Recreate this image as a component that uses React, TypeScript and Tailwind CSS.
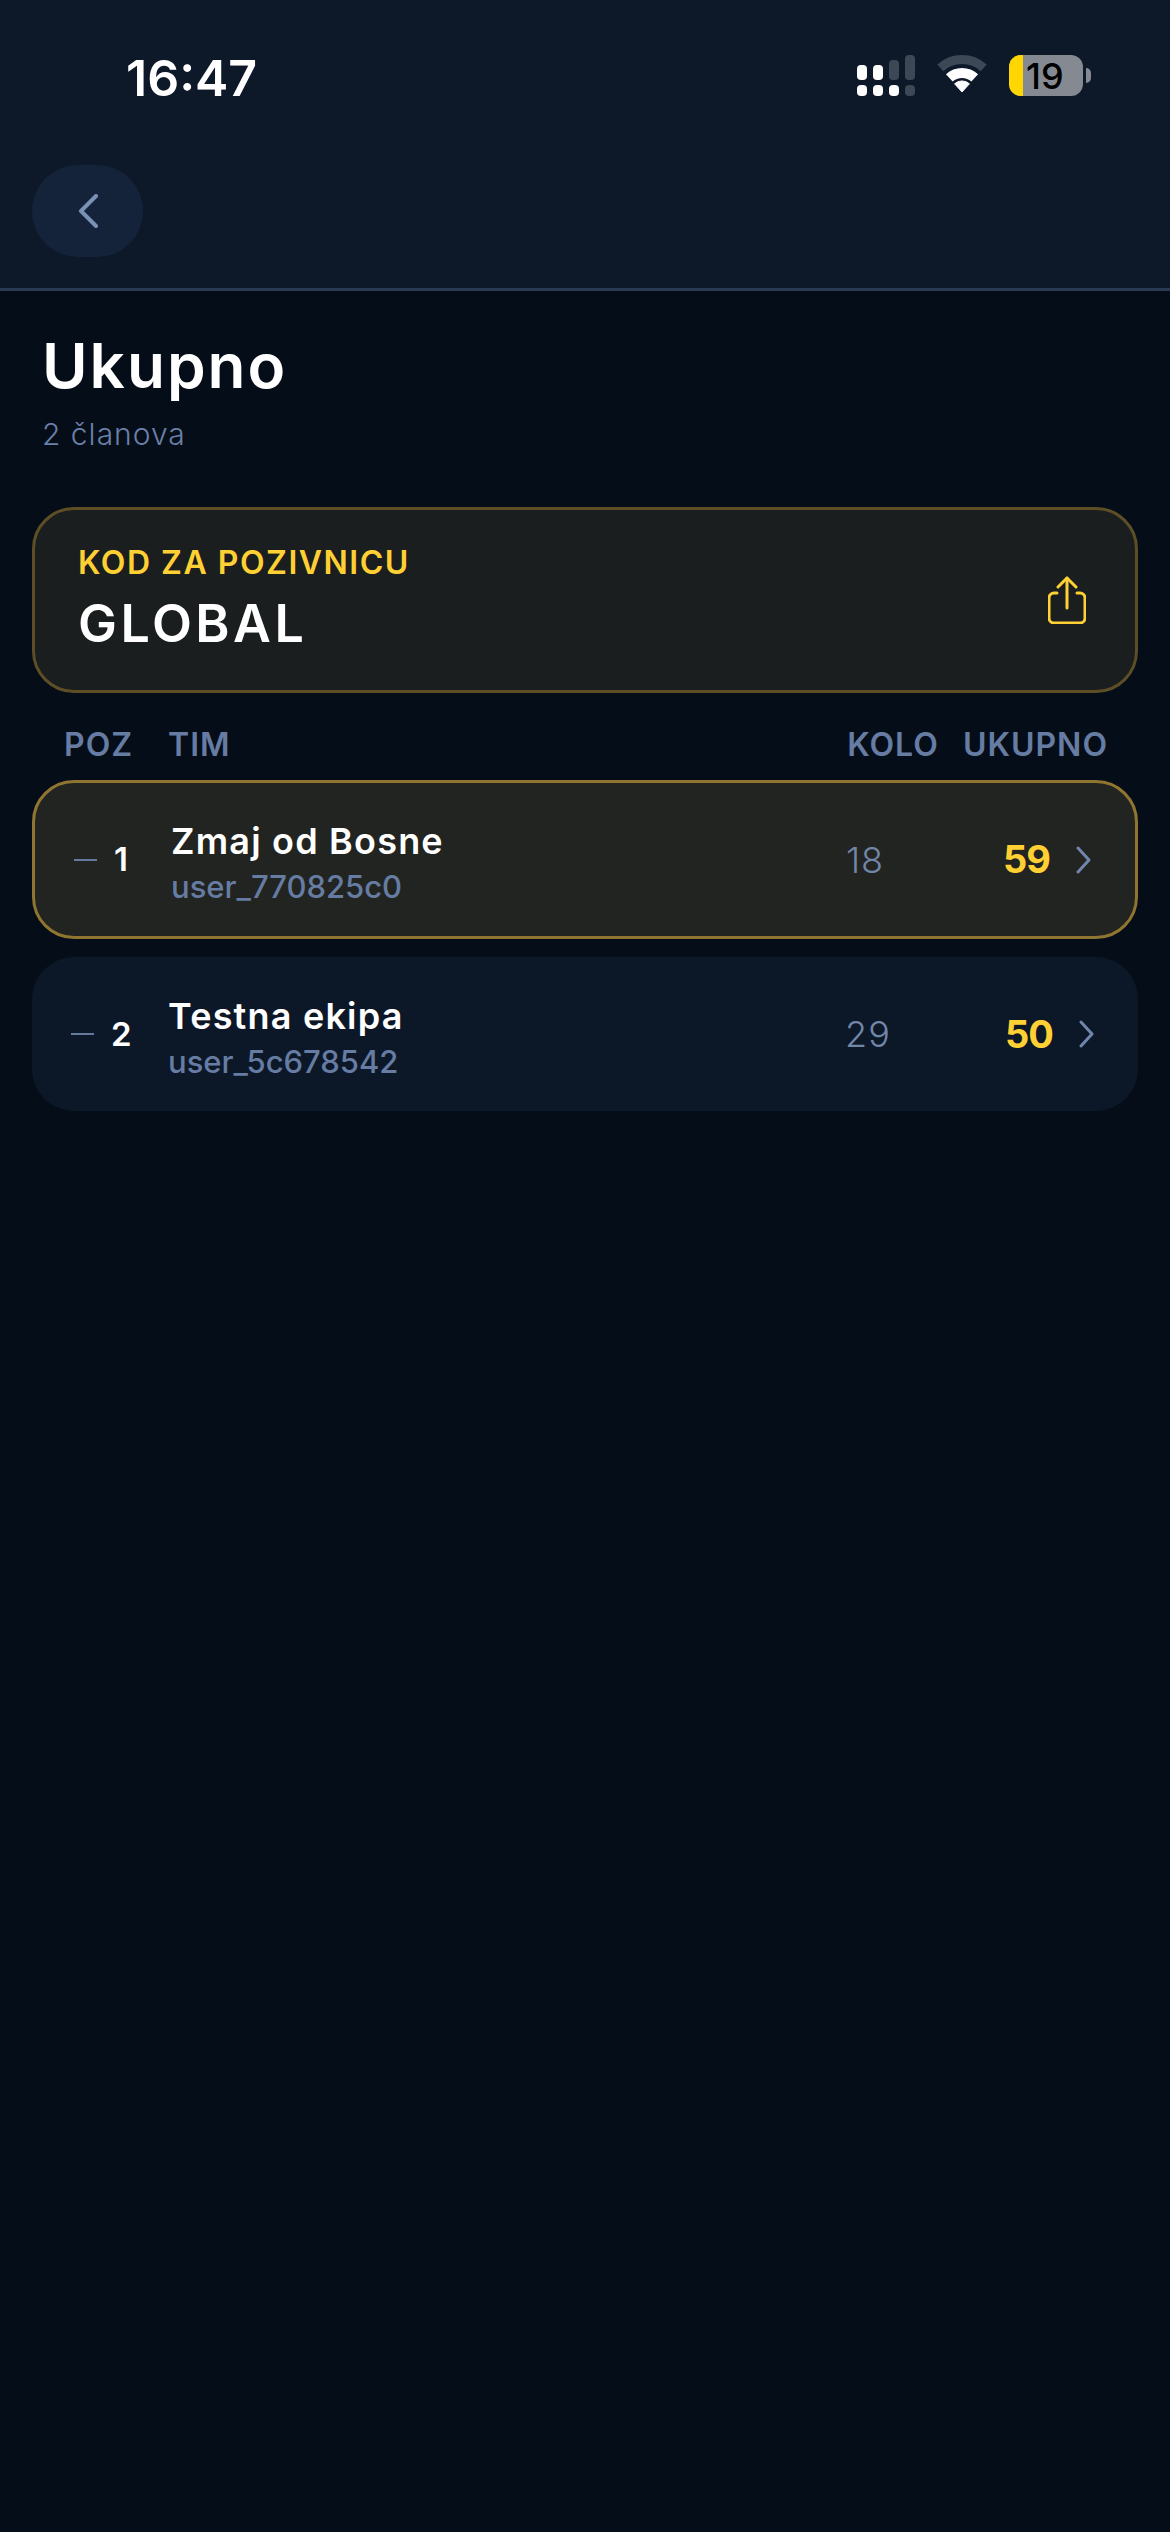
import React from "react";

const teams = [
  { pos: 1, name: "Zmaj od Bosne", user: "user_770825c0", round: 18, total: 59, mine: true },
  { pos: 2, name: "Testna ekipa", user: "user_5c678542", round: 29, total: 50, mine: false },
];

const SignalIcon = () => (
  <svg width="58" height="41" viewBox="0 0 58 41">
    <rect x="0" y="10" width="10" height="15" rx="4" fill="#fff" />
    <rect x="16" y="10" width="10" height="15" rx="4" fill="#fff" />
    <rect x="32" y="5" width="10" height="20" rx="4" fill="#3d4857" />
    <rect x="48" y="0" width="10" height="25" rx="4" fill="#3d4857" />
    <rect x="0" y="30" width="10" height="11" rx="4" fill="#fff" />
    <rect x="16" y="30" width="10" height="11" rx="4" fill="#fff" />
    <rect x="32" y="30" width="10" height="11" rx="4" fill="#fff" />
    <rect x="48" y="30" width="10" height="11" rx="4" fill="#3d4857" />
  </svg>
);

const WifiIcon = () => (
  <svg width="52" height="38" viewBox="0 0 52 38" fill="none">
    <path d="M4.3 12.9A32.5 32.5 0 0 1 47.7 12.9" stroke="#3d4857" strokeWidth="9" />
    <path d="M13.3 22.9A19 19 0 0 1 38.7 22.9" stroke="#fff" strokeWidth="10" />
    <path d="M26 37L18.6 28.8A11 11 0 0 1 33.4 28.8Z" fill="#fff" stroke="#fff" strokeLinejoin="round" />
  </svg>
);

const Battery = () => (
  <div className="flex items-center">
    <div className="flex h-[41px] w-[74px] items-center rounded-[12px] bg-[#858a92]">
      <div className="h-full w-[14px] rounded-l-[12px] bg-[#ffd600]" />
      <span className="ml-[3px] text-[36px] leading-none font-medium text-black">19</span>
    </div>
    <div className="ml-[3px] h-[15px] w-[5px] rounded-r-full bg-[#858a92]" />
  </div>
);

const ShareIcon = () => (
  <svg width="38" height="48" viewBox="0 0 38 48" fill="none" stroke="#ffd033" strokeWidth="3" strokeLinecap="round" strokeLinejoin="round">
    <path d="M9 17H6a5 5 0 0 0-5 5v20a5 5 0 0 0 5 5h26a5 5 0 0 0 5-5V22a5 5 0 0 0-5-5h-3" />
    <path d="M19 32V2" />
    <path d="M10 11l9-9 9 9" />
  </svg>
);

const Chevron = ({ className = "" }: { className?: string }) => (
  <svg className={className} width="18" height="28" viewBox="0 0 18 28" fill="none" stroke="#7086ab" strokeWidth="3" strokeLinecap="round" strokeLinejoin="round">
    <path d="M4 2l11 12L4 26" />
  </svg>
);

const TeamRow = ({ team }: { team: (typeof teams)[number] }) => (
  <div
    className={
      team.mine
        ? "flex h-[159px] items-center rounded-[42px] border-[3px] border-[#8f7530] bg-[#222421] pr-[43px] pl-[39px]"
        : "flex h-[154px] items-center rounded-[42px] bg-[#0c1828] pr-[43px] pl-[39px]"
    }
  >
    <div className="flex w-[97px] items-center">
      <div className="h-[2px] w-[23px] bg-[#65799e]" />
      <span className="ml-[17px] text-[33px] leading-none font-semibold text-white">{team.pos}</span>
    </div>
    <div className="flex-1 pt-[8px]">
      <div className="text-[36px] leading-[46px] font-semibold tracking-[1.2px] text-white">{team.name}</div>
      <div className="mt-[1px] text-[31px] leading-[44px] font-medium text-[#667ca3]">{team.user}</div>
    </div>
    <div className="w-[46px] text-center text-[36px] font-light tracking-[1px] text-[#7286a8]">{team.round}</div>
    <div className="w-[162px] text-right text-[38px] font-bold tracking-[-1px] text-[#ffd033]">{team.total}</div>
    <Chevron className="ml-[24px]" />
  </div>
);

export default function App() {
  return (
    <div className="h-[2532px] overflow-hidden bg-[#050d18] font-['Inter',sans-serif]">
      <header className="h-[291px] border-b-[3px] border-[#2a3a55] bg-[#0d1929]">
        <div className="flex h-[165px] items-start justify-between pt-[55px] pr-[79px] pl-[126px]">
          <span className="text-[50px] leading-[46px] font-semibold text-white">16:47</span>
          <div className="flex items-start gap-[21px]">
            <SignalIcon />
            <WifiIcon />
            <Battery />
          </div>
        </div>
        <button className="ml-[32px] flex h-[92px] w-[111px] items-center justify-center rounded-[46px] bg-[#14233a]">
          <svg width="22" height="34" viewBox="0 0 22 34" fill="none" stroke="#7a90b5" strokeWidth="4" strokeLinecap="round" strokeLinejoin="round">
            <path d="M19 2L4 17l15 15" />
          </svg>
        </button>
      </header>

      <div className="px-[42px] pt-[35px]">
        <h1 className="text-[62px] leading-[80px] font-semibold tracking-[2px] text-white">Ukupno</h1>
        <p className="mt-[10px] text-[30px] leading-[36px] font-light tracking-[1px] text-[#6b80a8]">2 članova</p>
      </div>

      <div className="mx-[32px] mt-[55px] flex h-[186px] items-center justify-between rounded-[42px] border-[3px] border-[#5e4e26] bg-[#1a1e1f] pr-[49px] pl-[43px]">
        <div className="pb-[3px]">
          <div className="text-[32px] leading-[40px] font-semibold tracking-[1.5px] text-[#ffd033]">KOD ZA POZIVNICU</div>
          <div className="mt-[11px] text-[52px] leading-[60px] font-semibold tracking-[3.5px] text-white">GLOBAL</div>
        </div>
        <ShareIcon />
      </div>

      <div className="mx-[32px] mt-[25px] flex h-[54px] items-center pr-[30px] pl-[32px] text-[32px] font-semibold tracking-[1px] text-[#667ca3]">
        <span className="w-[104px]">POZ</span>
        <span className="flex-1">TIM</span>
        <span>KOLO</span>
        <span className="ml-[24px]">UKUPNO</span>
      </div>

      <div className="mx-[32px] mt-[8px] flex flex-col gap-[18px]">
        {teams.map((team) => (
          <TeamRow key={team.pos} team={team} />
        ))}
      </div>
    </div>
  );
}
